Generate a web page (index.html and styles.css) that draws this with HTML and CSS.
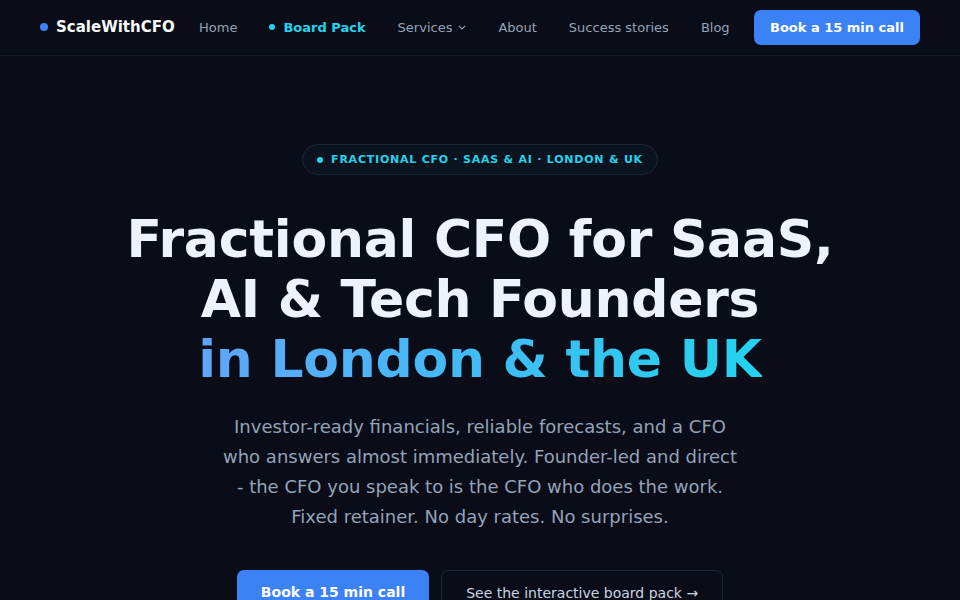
FILE: index.html
```html
<!DOCTYPE html>
<html lang="en">

<head>
    <meta charset="UTF-8">
    <meta name="viewport" content="width=device-width, initial-scale=1.0">
    <title>ScaleWithCFO - Fractional CFO for SaaS, AI & Tech Founders</title>
    <link rel="stylesheet" href="styles.css">
</head>

<body>

    <header class="site-header">
        <a class="logo" href="#"><span class="logo-dot"></span>ScaleWithCFO</a>
        <nav class="nav">
            <a href="#">Home</a>
            <a href="#" class="active"><span class="active-dot"></span>Board Pack</a>
            <a href="#" class="has-menu">Services
                <svg width="8" height="5" viewBox="0 0 8 5" fill="none">
                    <path d="M0.8 0.8 4 4 7.2 0.8" stroke="#94a3b8" stroke-width="1.1" />
                </svg>
            </a>
            <a href="#">About</a>
            <a href="#">Success stories</a>
            <a href="#">Blog</a>
        </nav>
        <a class="btn btn-small" href="#">Book a 15 min call</a>
    </header>

    <section class="hero">
        <div class="badge"><span class="badge-dot"></span>FRACTIONAL CFO · SAAS &amp; AI · LONDON &amp; UK</div>

        <h1>Fractional CFO for SaaS,<br>AI &amp; Tech Founders<br><span class="gradient">in London &amp; the UK</span></h1>

        <p class="lead">Investor-ready financials, reliable forecasts, and a CFO who answers almost immediately. Founder-led and direct - the CFO you speak to is the CFO who does the work. Fixed retainer. No day rates. No surprises.</p>

        <div class="actions">
            <a class="btn btn-large" href="#">Book a 15 min call</a>
            <a class="btn btn-outline" href="#">See the interactive board pack →</a>
        </div>
    </section>

</body>

</html>
```

FILE: styles.css
```css
* {
    box-sizing: border-box;
}

body {
    margin: 0;
    font-family: "DejaVu Sans", sans-serif;
    background-color: #0a0d18;
    color: #f1f5f9;
}

a {
    text-decoration: none;
}

.site-header {
    display: flex;
    align-items: center;
    justify-content: space-between;
    height: 56px;
    padding: 0 40px 1px;
    border-bottom: 1px solid #161b26;
}

.logo {
    display: flex;
    align-items: center;
    gap: 8px;
    font-size: 15px;
    font-weight: bold;
    color: #f8fafc;
}

.logo-dot {
    width: 8px;
    height: 8px;
    border-radius: 50%;
    background: #3b82f6;
}

.nav {
    display: flex;
    align-items: center;
    gap: 32px;
}

.nav a {
    display: flex;
    align-items: center;
    font-size: 13px;
    color: #94a3b8;
}

.nav a.active {
    color: #22d3ee;
    font-weight: bold;
    gap: 8px;
}

.active-dot {
    width: 6px;
    height: 6px;
    border-radius: 50%;
    background: #22d3ee;
}

.nav a.has-menu {
    gap: 6px;
}

.btn {
    display: inline-block;
    border-radius: 7px;
    font-weight: bold;
    color: #fff;
    background: #3b82f6;
}

.btn-small {
    padding: 10px 16px;
    font-size: 13px;
    line-height: 15px;
}

.hero {
    display: flex;
    flex-direction: column;
    align-items: center;
    text-align: center;
    padding-top: 88px;
}

.badge {
    display: flex;
    align-items: center;
    gap: 8px;
    height: 31px;
    padding: 0 14px;
    border: 1px solid #1c2836;
    border-radius: 16px;
    background: rgba(34, 211, 238, 0.03);
    color: #22d3ee;
    font-size: 11px;
    font-weight: bold;
    letter-spacing: 0.07em;
}

.badge-dot {
    width: 6px;
    height: 6px;
    border-radius: 50%;
    background: #22d3ee;
}

h1 {
    margin: 34px 0 0;
    font-size: 52px;
    line-height: 60px;
    letter-spacing: -0.005em;
    color: #eef2fb;
}

.gradient {
    background: linear-gradient(90deg, #60a5fa, #22d3ee);
    -webkit-background-clip: text;
    background-clip: text;
    color: transparent;
}

.lead {
    width: 520px;
    margin: 23px 0 0;
    font-size: 18px;
    line-height: 30px;
    color: #94a3b8;
}

.actions {
    display: flex;
    gap: 12px;
    margin-top: 38px;
}

.btn-large {
    padding: 14px 24px;
    font-size: 14px;
    line-height: 17px;
}

.btn-outline {
    padding: 14px 24px;
    font-size: 14px;
    line-height: 17px;
    font-weight: normal;
    color: #cbd5e1;
    background: transparent;
    border: 1px solid #1e2633;
}
```
